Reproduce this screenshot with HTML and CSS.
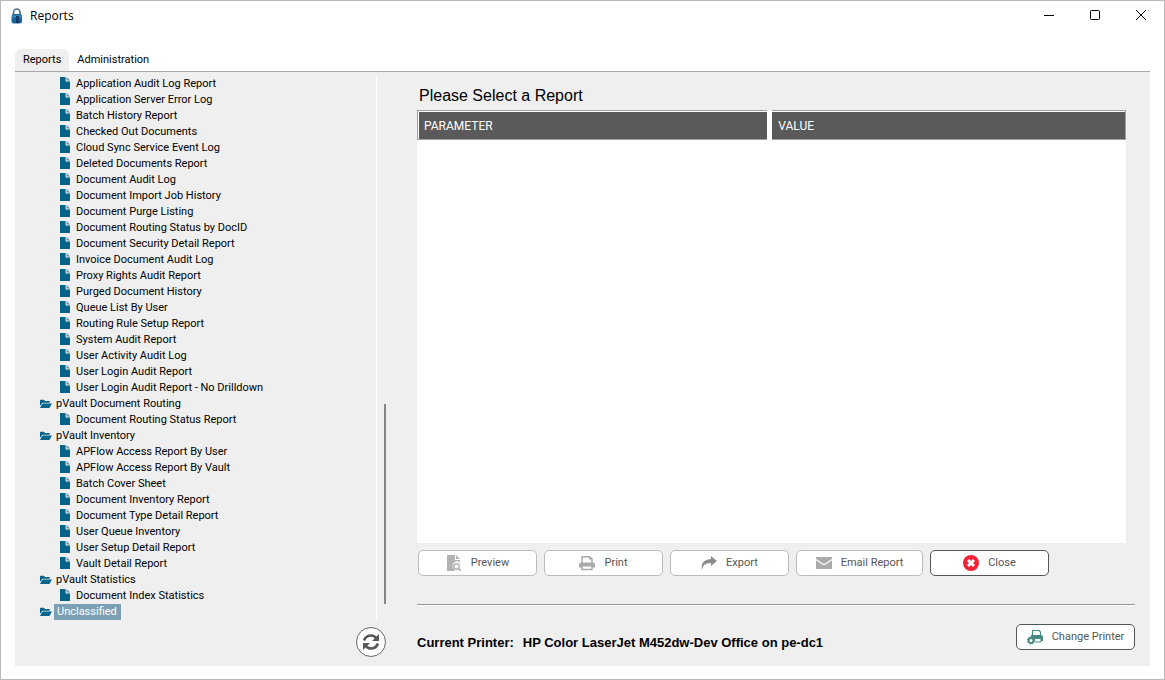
FILE: index.html
```
<!DOCTYPE html>
<html lang="en">
<head>
<meta charset="utf-8">
<title>Reports</title>
<link rel="stylesheet" href="styles.css">
</head>
<body>
<svg class="defs" aria-hidden="true">
  <symbol id="doc" viewBox="0 0 10 12"><path d="M0 0h5.6v4.4H10V12H0z" fill="#066388"/><path d="M6.6 0L10 3.4H6.6z" fill="#5796ae"/></symbol>
  <symbol id="folder" viewBox="0 0 12 10"><path d="M0 7V1.5Q0 .7.8.7H4l1 1.2h4q.8 0 .8.8v1H3.2Q2.3 3.700 1.900 4.400z" fill="#066388"/><path d="M0 9l2.300-4q.3-.5.900-.5H12L9.800 8.600q-.3.400-.8.400z" fill="#066388"/></symbol>
</svg>
<div class="window">
  <header class="titlebar">
    <svg class="lock" viewBox="0 0 12 16"><path d="M2.500 8V4.500a3.300 3.500 0 0 1 6.600 0V8" fill="none" stroke="#5a7186" stroke-width="1.700"/><rect x=".5" y="6" width="10.500" height="9.500" rx="2.500" fill="#19639b"/><path d="M1 8q5-2 9.500 0v2q-5-2-9.500 0z" fill="#3e8abb"/><path d="M5 8h3v7H5z" fill="#0d3963"/></svg>
    <h1 class="title">Reports</h1>
    <button class="control" aria-label="Minimize"><svg viewBox="0 0 12 12"><path d="M1 5.500h10" /></svg></button>
    <button class="control" aria-label="Maximize"><svg viewBox="0 0 12 12"><rect x="1.500" y=".5" width="9" height="9" rx="1"/></svg></button>
    <button class="control" aria-label="Close window"><svg viewBox="0 0 12 12"><path d="M1 0l10 10M11 0L1 10"/></svg></button>
  </header>
  <nav class="tabs">
    <button class="tab active">Reports</button>
    <button class="tab">Administration</button>
  </nav>
  <div class="panel">
    <aside class="sidebar">
      <div class="tree-area">
        <ul class="tree">
          <li><ul>
            <li><svg class="doc"><use href="#doc"/></svg><span>Application Audit Log Report</span></li>
            <li><svg class="doc"><use href="#doc"/></svg><span>Application Server Error Log</span></li>
            <li><svg class="doc"><use href="#doc"/></svg><span>Batch History Report</span></li>
            <li><svg class="doc"><use href="#doc"/></svg><span>Checked Out Documents</span></li>
            <li><svg class="doc"><use href="#doc"/></svg><span>Cloud Sync Service Event Log</span></li>
            <li><svg class="doc"><use href="#doc"/></svg><span>Deleted Documents Report</span></li>
            <li><svg class="doc"><use href="#doc"/></svg><span>Document Audit Log</span></li>
            <li><svg class="doc"><use href="#doc"/></svg><span>Document Import Job History</span></li>
            <li><svg class="doc"><use href="#doc"/></svg><span>Document Purge Listing</span></li>
            <li><svg class="doc"><use href="#doc"/></svg><span>Document Routing Status by DocID</span></li>
            <li><svg class="doc"><use href="#doc"/></svg><span>Document Security Detail Report</span></li>
            <li><svg class="doc"><use href="#doc"/></svg><span>Invoice Document Audit Log</span></li>
            <li><svg class="doc"><use href="#doc"/></svg><span>Proxy Rights Audit Report</span></li>
            <li><svg class="doc"><use href="#doc"/></svg><span>Purged Document History</span></li>
            <li><svg class="doc"><use href="#doc"/></svg><span>Queue List By User</span></li>
            <li><svg class="doc"><use href="#doc"/></svg><span>Routing Rule Setup Report</span></li>
            <li><svg class="doc"><use href="#doc"/></svg><span>System Audit Report</span></li>
            <li><svg class="doc"><use href="#doc"/></svg><span>User Activity Audit Log</span></li>
            <li><svg class="doc"><use href="#doc"/></svg><span>User Login Audit Report</span></li>
            <li><svg class="doc"><use href="#doc"/></svg><span>User Login Audit Report - No Drilldown</span></li>
          </ul></li>
          <li><div class="group"><svg class="folder"><use href="#folder"/></svg><span>pVault Document Routing</span></div><ul>
            <li><svg class="doc"><use href="#doc"/></svg><span>Document Routing Status Report</span></li>
          </ul></li>
          <li><div class="group"><svg class="folder"><use href="#folder"/></svg><span>pVault Inventory</span></div><ul>
            <li><svg class="doc"><use href="#doc"/></svg><span>APFlow Access Report By User</span></li>
            <li><svg class="doc"><use href="#doc"/></svg><span>APFlow Access Report By Vault</span></li>
            <li><svg class="doc"><use href="#doc"/></svg><span>Batch Cover Sheet</span></li>
            <li><svg class="doc"><use href="#doc"/></svg><span>Document Inventory Report</span></li>
            <li><svg class="doc"><use href="#doc"/></svg><span>Document Type Detail Report</span></li>
            <li><svg class="doc"><use href="#doc"/></svg><span>User Queue Inventory</span></li>
            <li><svg class="doc"><use href="#doc"/></svg><span>User Setup Detail Report</span></li>
            <li><svg class="doc"><use href="#doc"/></svg><span>Vault Detail Report</span></li>
          </ul></li>
          <li><div class="group"><svg class="folder"><use href="#folder"/></svg><span>pVault Statistics</span></div><ul>
            <li><svg class="doc"><use href="#doc"/></svg><span>Document Index Statistics</span></li>
          </ul></li>
          <li><div class="group"><svg class="folder"><use href="#folder"/></svg><span class="selected">Unclassified</span></div></li>
        </ul>
        <div class="scrollbar"><div class="thumb"></div></div>
      </div>
      <div class="sidebar-footer">
        <button class="refresh" aria-label="Refresh"><svg viewBox="0 0 18 18"><path d="M2 7.500Q4 2.500 9 2.500q3.500 0 5.500 3M16 10.500q-2 5-7 5-3.500 0-5.500-3" fill="none" stroke="#585858" stroke-width="2.700"/><path d="M17 1v7h-7zM1 17v-7h7z" fill="#585858"/></svg></button>
      </div>
    </aside>
    <main class="main">
      <h2 class="heading">Please Select a Report</h2>
      <div class="grid">
        <table>
          <thead><tr><th scope="col">PARAMETER</th><th scope="col">VALUE</th></tr></thead>
          <tbody></tbody>
        </table>
      </div>
      <div class="actions">
        <button class="btn" disabled><svg class="icon" viewBox="0 0 16 16"><path d="M1 0h8v5h5v2.500a4.300 4.300 0 0 0-6 6.500l1 2H1z" fill="#b2b2b2"/><path d="M10 0l4 4h-4z" fill="#b2b2b2"/><circle cx="10.500" cy="11.500" r="2.700" fill="#fff" stroke="#b2b2b2" stroke-width="1.400"/><path d="M12.500 13.500l2.300 2.300" stroke="#b2b2b2" stroke-width="1.600"/></svg>Preview</button>
        <button class="btn" disabled><svg class="icon" viewBox="0 0 16 16"><path d="M3 8V1.700h7.500L13 4v4" fill="#fff" stroke="#aaa" stroke-width="1.500"/><path d="M0 12.500V9.500q0-2 2-2h12q2 0 2 2v3z" fill="#aaa"/><path d="M3 10.800h10v3.700H3z" fill="#fff" stroke="#aaa" stroke-width="1.500"/><path d="M10 1.500v3h3.500z" fill="#aaa"/></svg>Print</button>
        <button class="btn" disabled><svg class="icon" viewBox="0 0 16 16"><path d="M1 15Q-1 4.500 10 4V1l6 5-6 5V8Q2 7.500 1 15z" fill="#8c8c8c"/></svg>Export</button>
        <button class="btn wide" disabled><svg class="icon" viewBox="0 0 16 16"><path d="M0 2h16v12H0z" fill="#aaa"/><path d="M0 4.500l6.500 4.500q1.500 1 3 0L16 4.500" fill="none" stroke="#fff" stroke-width="1.300"/></svg>Email Report</button>
        <button class="btn strong"><svg class="icon" viewBox="0 0 16 16"><circle cx="8" cy="8" r="8" fill="#f32036"/><path d="M5 5l6 6M11 5l-6 6" stroke="#fff" stroke-width="3"/></svg>Close</button>
      </div>
      <hr class="divider">
      <div class="printer">
        <p class="printer-name"><span>Current Printer:</span><span>HP Color LaserJet M452dw-Dev Office on pe-dc1</span></p>
        <button class="btn strong"><svg class="icon" viewBox="0 0 16 16"><path d="M5.500 6V1.500h6.500L13.500 3v3.500" fill="#fff" stroke="#438b83" stroke-width="1.100"/><path d="M4 6h10q2 0 2 2v4H7V9H4z" fill="#438b83"/><path d="M8 9.500h6V13H8" fill="#fff" stroke="#438b83"/><circle cx="4" cy="11.500" r="2.500" fill="#fff" stroke="#438b83" stroke-width="1.900"/><circle cx="4" cy="11.500" r="3.600" fill="none" stroke="#438b83" stroke-width="1" stroke-dasharray="1.400 1.430"/></svg>Change Printer</button>
      </div>
    </main>
  </div>
</div>
</body>
</html>
```
FILE: styles.css
```
* { box-sizing: border-box; }
body { margin: 0; color: #000; font: 11px/16px Roboto, "Liberation Sans", sans-serif; }
button { padding: 0; border: 0; background: none; color: inherit; font: inherit; }
ul { margin: 0; padding: 0; list-style: none; }
.defs { position: absolute; width: 0; height: 0; }

.window {
  display: flex;
  flex-direction: column;
  min-height: 100vh;
  padding: 0 14px 13px;
  border: 1px solid #b9b9b9;
  background: #fff;
}
.titlebar { display: flex; align-items: center; height: 30px; margin: 0 -14px; padding-left: 10px; }
.lock { width: 12px; height: 16px; }
.title { flex: 1; margin: 0 0 0 7px; font: 12px/16px "Open Sans", "Noto Sans", sans-serif; }
.control { display: grid; place-items: center; width: 46px; height: 30px; }
.control svg { width: 12px; height: 12px; fill: none; stroke: #000; stroke-width: 1; }

.tabs { display: flex; align-items: flex-end; height: 41px; border-bottom: 1px solid #a6a9a6; }
.tab { height: 22px; padding: 0 8px; border-radius: 6px 6px 0 0; line-height: 22px; }
.tab.active { background: #efefef; }

.panel { display: flex; flex: 1; padding-right: 15px; background: #efefef; }
.sidebar { display: flex; flex: 0 0 402px; flex-direction: column; }
.tree-area { display: flex; flex: 1; margin-top: 3px; }
.tree { width: 362px; padding-top: 1px; border-right: 1px solid #fff; }
.tree ul li, .group { display: flex; align-items: center; height: 16px; white-space: nowrap; }
.tree ul li { padding-left: 45px; gap: 6px; }
.group { padding-left: 25px; gap: 4px; }
.tree span { line-height: 18px; }
.doc { width: 10px; height: 12px; margin-bottom: 2px; }
.folder { width: 12px; height: 10px; }
.tree .selected { margin-left: -2px; padding: 0 4px 0 3px; background: #7ba0b5; color: #fff; line-height: 16px; }
.scrollbar { display: flex; flex-direction: column; justify-content: flex-end; padding: 0 0 17px 7px; }
.thumb { width: 2px; height: 200px; background: #858585; }
.sidebar-footer { height: 45px; padding: 6px 31px 0 0; text-align: right; }
.refresh { display: inline-grid; place-items: center; width: 30px; height: 30px; border: 1px solid #666; border-radius: 50%; background: #fff; }
.refresh svg { width: 18px; height: 18px; }

.main { display: flex; flex: 1; flex-direction: column; padding-bottom: 15px; }
.heading { margin: 14px 0 4px 2px; font: 16px/20px "Liberation Sans", Arial, sans-serif; }
.grid { flex: 1; margin-right: 9px; background: #fff; }
.grid table { width: 100%; border-collapse: separate; border-spacing: 0; table-layout: fixed; }
.grid th {
  height: 30px;
  padding: 2px 6px 0;
  background: #5a5a5a;
  box-shadow: inset 0 1px #a0a0a0, inset 0 -1px #a0a0a0, inset -1px 0 #a0a0a0, inset 0 2px #fff;
  color: #fff;
  font-size: 12px;
  font-weight: 400;
  text-align: left;
}
.grid th:first-child { width: 49.4%; padding-left: 7px; box-shadow: inset 1px 0 #a0a0a0, inset 0 1px #a0a0a0, inset 0 -1px #a0a0a0, inset 2px 2px #fff; }
.grid th + th { border-left: 5px solid #fff; }
.actions { display: flex; gap: 7px; margin: 7px 0 0 1px; }
.btn {
  display: flex;
  align-items: center;
  justify-content: center;
  gap: 9px;
  width: 119px;
  height: 26px;
  border: 1px solid #bcbcbc;
  border-radius: 5px;
  background: #fff;
  color: #555;
}
.btn.wide { width: 127px; }
.btn.strong { border-color: #555; }
.icon { width: 16px; height: 16px; }
.divider { width: 100%; height: 2px; margin: 28px 0 0; border: 0; border-top: 1px solid #999; background: #fff; }
.printer { display: flex; align-items: flex-start; justify-content: space-between; padding-top: 18px; }
.printer-name { display: flex; gap: 9px; margin: 11px 0 0; font: bold 13px/16px "Liberation Sans", Arial, sans-serif; }
```
